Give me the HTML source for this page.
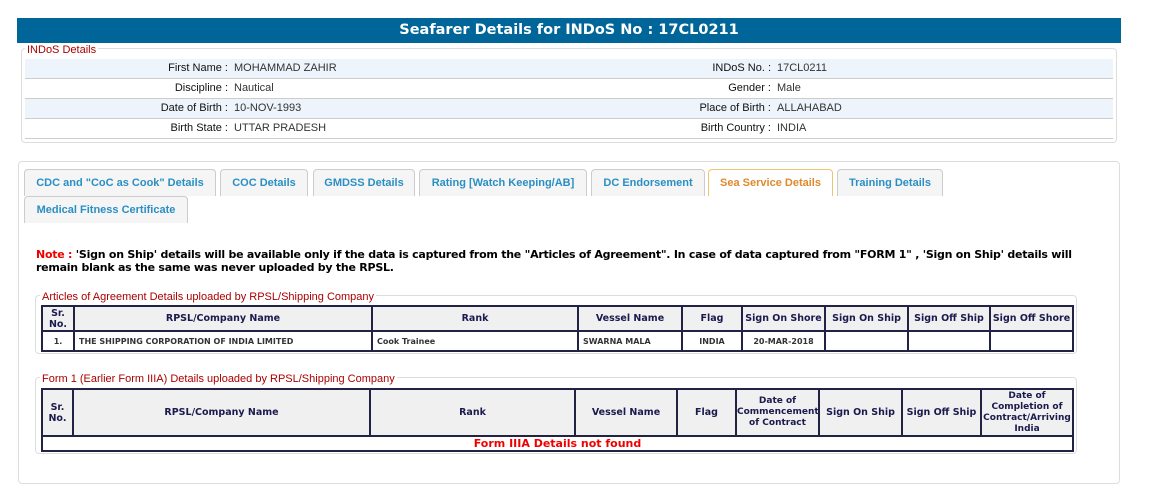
<!DOCTYPE html>
<html><head><meta charset="utf-8"><style>
*{box-sizing:border-box;margin:0;padding:0}
body{width:1159px;height:504px;background:#fff;position:relative;font-family:"Liberation Sans",Arial,sans-serif;overflow:hidden}
.abs{position:absolute}
.hdr{left:17px;top:18px;width:1104px;height:25px;background:#006699;color:#fff;font:bold 14.5px "DejaVu Sans",Verdana,sans-serif;text-align:center;line-height:25px}
.fs{border:1px solid #ddd;border-radius:4px}
.leg{background:#fff;color:#a00;font-size:11px;padding:0 2px;line-height:12px}
.row{left:25px;width:1088px;height:20px;border-bottom:1px solid #ccc;font-size:11px;color:#333;line-height:19px}
.row.b{background:#eef4fb}
.row span{position:absolute}
.l{text-align:right;color:#111}
.tab{position:absolute;height:27px;border:1px solid #ccc;border-bottom:none;border-radius:4px 4px 0 0;background:#f5f5f5;color:#2a8fc4;font-size:11px;font-weight:bold;text-align:center;line-height:26px}
.tab.act{background:#fff;border-color:#f0c36d;color:#e0892b}
.note{left:36px;top:248px;width:1100px;white-space:nowrap;font:bold 11px "DejaVu Sans",Verdana,sans-serif;color:#000;line-height:13px;letter-spacing:-0.25px}
table{position:absolute;border-collapse:collapse;font:bold 9.5px "DejaVu Sans",Verdana,sans-serif;color:#1a1a4e;table-layout:fixed}
td,th{border:2px solid #222244;padding:0;text-align:center;overflow:hidden;white-space:nowrap}
th{background:#f0f0f0;color:#1a1a4e;line-height:11px}
th.w{white-space:normal}
td{font-size:8px;color:#333;background:#fff}
</style></head><body>
<div class="abs hdr">Seafarer Details for INDoS No : 17CL0211</div>
<div class="abs fs" style="left:21px;top:48px;width:1096px;height:95px"></div>
<div class="abs leg" style="left:25px;top:44px">INDoS Details</div>
<div class="abs row b" style="top:59px"><span class="l" style="right:885px">First Name :</span><span style="left:209px">MOHAMMAD ZAHIR</span><span class="l" style="right:342px">INDoS No. :</span><span style="left:752px">17CL0211</span></div>
<div class="abs row" style="top:79px"><span class="l" style="right:885px">Discipline :</span><span style="left:209px">Nautical</span><span class="l" style="right:342px">Gender :</span><span style="left:752px">Male</span></div>
<div class="abs row b" style="top:99px"><span class="l" style="right:885px">Date of Birth :</span><span style="left:209px">10-NOV-1993</span><span class="l" style="right:342px">Place of Birth :</span><span style="left:752px">ALLAHABAD</span></div>
<div class="abs row" style="top:119px"><span class="l" style="right:885px">Birth State :</span><span style="left:209px">UTTAR PRADESH</span><span class="l" style="right:342px">Birth Country :</span><span style="left:752px">INDIA</span></div>

<div class="abs fs" style="left:18px;top:161px;width:1102px;height:323px"></div>
<div class="tab" style="left:24px;top:169px;width:192px">CDC and "CoC as Cook" Details</div>
<div class="tab" style="left:220px;top:169px;width:88px">COC Details</div>
<div class="tab" style="left:313px;top:169px;width:102px">GMDSS Details</div>
<div class="tab" style="left:419px;top:169px;width:168px">Rating [Watch Keeping/AB]</div>
<div class="tab" style="left:591px;top:169px;width:114px">DC Endorsement</div>
<div class="tab act" style="left:708px;top:169px;width:125px">Sea Service Details</div>
<div class="tab" style="left:837px;top:169px;width:106px">Training Details</div>
<div class="tab" style="left:24px;top:196px;width:164px">Medical Fitness Certificate</div>

<div class="abs note"><span style="color:#e00">Note :</span> 'Sign on Ship' details will be available only if the data is captured from the "Articles of Agreement". In case of data captured from "FORM 1" , 'Sign on Ship' details will<br>remain blank as the same was never uploaded by the RPSL.</div>

<div class="abs fs" style="left:35px;top:295px;width:1042px;height:59px"></div>
<div class="abs leg" style="left:40px;top:291px">Articles of Agreement Details uploaded by RPSL/Shipping Company</div>
<table style="left:41px;top:305px;width:1031px">
<colgroup><col style="width:32px"><col style="width:298px"><col style="width:206px"><col style="width:104px"><col style="width:60px"><col style="width:83px"><col style="width:83px"><col style="width:82px"><col style="width:83px"></colgroup>
<tr style="height:25px"><th class="w">Sr.<br>No.</th><th>RPSL/Company Name</th><th>Rank</th><th>Vessel Name</th><th>Flag</th><th>Sign On Shore</th><th>Sign On Ship</th><th>Sign Off Ship</th><th>Sign Off Shore</th></tr>
<tr style="height:20px"><td>1.</td><td style="text-align:left;padding-left:4px">THE SHIPPING CORPORATION OF INDIA LIMITED</td><td style="text-align:left;padding-left:4px">Cook Trainee</td><td style="text-align:left;padding-left:4px">SWARNA MALA</td><td>INDIA</td><td>20-MAR-2018</td><td></td><td></td><td></td></tr>
</table>

<div class="abs fs" style="left:35px;top:377px;width:1042px;height:77px"></div>
<div class="abs leg" style="left:40px;top:373px">Form 1 (Earlier Form IIIA) Details uploaded by RPSL/Shipping Company</div>
<table style="left:41px;top:388px;width:1031px">
<colgroup><col style="width:31px"><col style="width:297px"><col style="width:205px"><col style="width:102px"><col style="width:59px"><col style="width:83px"><col style="width:83px"><col style="width:79px"><col style="width:92px"></colgroup>
<tr style="height:47px"><th class="w">Sr.<br>No.</th><th>RPSL/Company Name</th><th>Rank</th><th>Vessel Name</th><th>Flag</th><th class="w" style="font-size:9px">Date of<br>Commencement<br>of Contract</th><th>Sign On Ship</th><th>Sign Off Ship</th><th class="w" style="font-size:9px">Date of<br>Completion of<br>Contract/Arriving<br>India</th></tr>
<tr style="height:15px"><td colspan="9" style="color:#e00;font-size:11px;line-height:12px">Form IIIA Details not found</td></tr>
</table>
</body></html>
